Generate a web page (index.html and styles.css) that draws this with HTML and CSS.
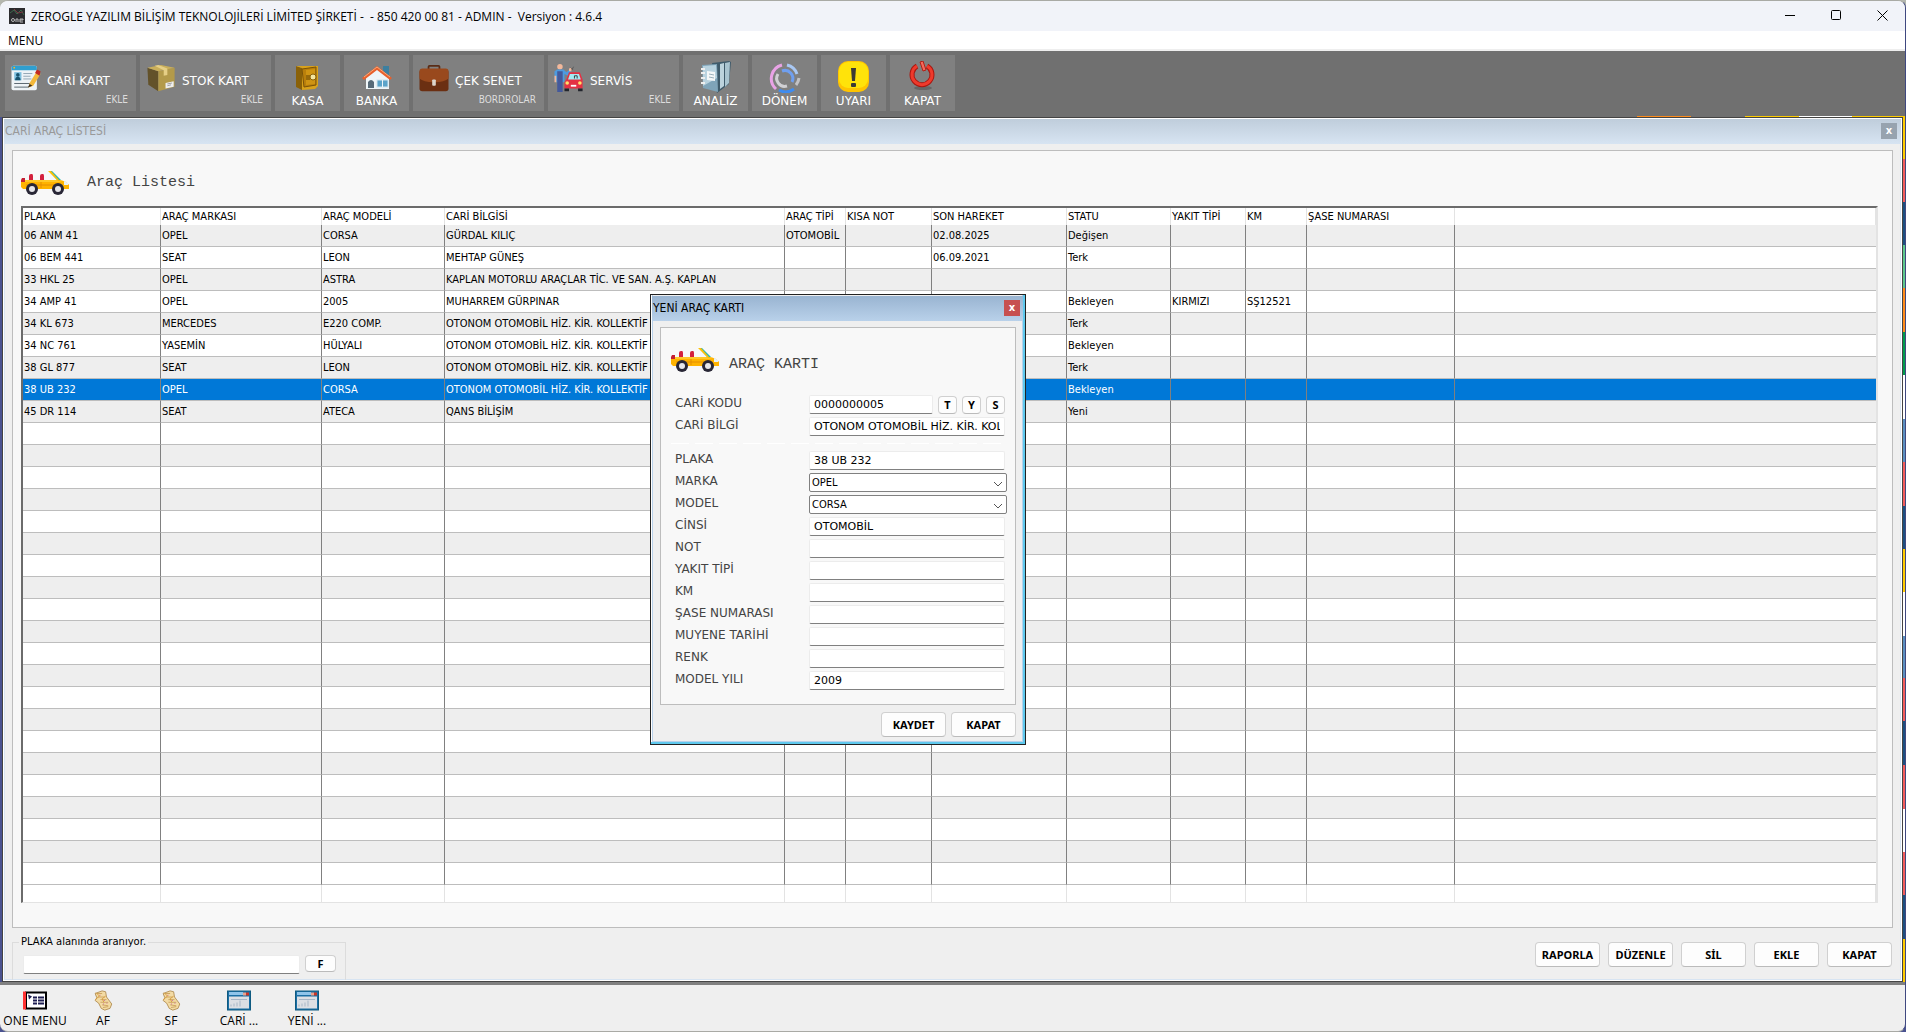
FILE: index.html
```html
<!DOCTYPE html>
<html lang="tr">

<head>
    <meta charset="UTF-8">
    <meta name="viewport" content="width=device-width, initial-scale=1.0">
    <title>Cari Araç Listesi</title>
    <link rel="stylesheet" href="styles.css">
</head>

<body>
    <svg class="defs" aria-hidden="true">
        <symbol id="car" viewBox="0 0 48 24">
            <path d="M28 0h3l9 9h-4z" fill="#2bb5b0" />
            <path d="M27 0h3l8 9h-2z" fill="#ffc107" />
            <path d="M8 9V5q0-2 2-2h1q1 0 1 2v4zM19 9V5q0-2 2-2h1q1 0 1 2v4z" fill="#d3203d" />
            <path d="M0 9h36c6 0 10 2 12 5v4H2L0 16z" fill="#ffb300" />
            <path d="M4 9h31l6 2H4z" fill="#ffc928" />
            <path d="M1 7h3v4H0V9z" fill="#c41f33" />
            <path d="M20 11v6M5 14h36" stroke="#e58e00" fill="none" />
            <path d="M43 10l4 2v2h-4z" fill="#e8f1f5" />
            <circle cx="11" cy="18" r="6" fill="#292736" />
            <circle cx="11" cy="18" r="3" fill="#e6e6ea" />
            <circle cx="37" cy="18" r="6" fill="#292736" />
            <circle cx="37" cy="18" r="3" fill="#e6e6ea" />
        </symbol>
        <symbol id="scroll" viewBox="0 0 24 24">
            <path d="M3 4l8-3 4 1 1 6 6 8-2 5-6 2-4-2-3-6-4-3 2-3z" fill="#f3dba4" stroke="#b08b50" />
            <path d="M5 4l6 0M6 8l8 0M9 11l7 0M9 14l9 0M11 17l7 1M12 20l6-1" stroke="#c9a05c" fill="none" />
            <path d="M4 3l4 4-5 4M15 7l-4 3 2 4" stroke="#d79a3c" fill="none" />
            <path d="M8 6h1M13 12h1M16 15h1M12 16h1" stroke="#c2559b" />
        </symbol>
        <symbol id="form" viewBox="0 0 24 20">
            <rect x=".5" y=".5" width="23" height="19" fill="#1b6fa5" stroke="#0f5a80" />
            <path d="M2 3h14" stroke="#8fc4ea" stroke-width="3" />
            <rect x="16" y="2" width="3" height="3" fill="#e8a08c" />
            <rect x="19" y="2" width="3" height="3" fill="#c93527" />
            <rect x="2" y="6" width="20" height="12" fill="#dcdfe4" />
            <path d="M4 16v-2M7 16v-3M10 16v-4M13 16v-6M4 9h16" stroke="#a7b6c6" />
        </symbol>
    </svg>

    <div class="app">
        <header class="titlebar">
            <svg class="app-icon" viewBox="0 0 16 16">
                <rect width="16" height="16" fill="#2b2b2e" />
                <path d="M1 5l4-3 3 4 4-4 3 5" stroke="#3d6a4c" fill="none" />
                <path d="M5 1l4 4 5-1" stroke="#7c3540" fill="none" />
                <circle cx="4" cy="12" r="1.500" stroke="#bbb" fill="none" />
                <path d="M7 14v-3h2v3M11 12h3v-1h-3v3h3" stroke="#bbb" fill="none" />
            </svg>
            <span class="app-title">ZEROGLE YAZILIM BİLİŞİM TEKNOLOJİLERİ LİMİTED ŞİRKETİ -&nbsp; - 850 420 00 81 - ADMIN -&nbsp; Versiyon : 4.6.4</span>
            <div class="window-buttons">
                <button type="button" aria-label="Simge durumuna küçült">
                    <svg viewBox="0 0 11 11"><path d="M0 5.500h10" /></svg>
                </button>
                <button type="button" aria-label="Ekranı kapla">
                    <svg viewBox="0 0 11 11"><rect x=".5" y=".5" width="9" height="9" rx="1" /></svg>
                </button>
                <button type="button" aria-label="Pencereyi kapat">
                    <svg viewBox="0 0 11 11"><path d="M.5 .5l10 10M10.500 .5l-10 10" /></svg>
                </button>
            </div>
        </header>

        <nav class="menubar"><a href="#">MENU</a></nav>

        <div class="toolbar">
            <button type="button" class="tool wide">
                <svg class="tool-icon" viewBox="0 0 32 32">
                    <rect x="0" y="2" width="28" height="27" rx="2" fill="#eef3f7" />
                    <path d="M0 7V4q0-2 2-2h24q2 0 2 2v3z" fill="#2f9fd0" />
                    <circle cx="3" cy="4" r="1" fill="#ffb020" />
                    <rect x="3" y="9" width="8" height="9" fill="#7fc0df" />
                    <circle cx="7" cy="12" r="2" fill="#17526e" />
                    <path d="M4 18q0-4 3-4t3 4z" fill="#17526e" />
                    <path d="M13 10.500h10M13 13.500h8M13 16.500h9" stroke="#8ba0b0" />
                    <path d="M3 21.500h18M3 25.500h16" stroke="#4d5a66" />
                    <path d="M20 21L28 8l4 3-8 13-5 2z" fill="#f4b83a" />
                    <path d="M26 10l2-4 4 2-1 5z" fill="#c22a22" />
                    <path d="M20 22l3 2-5 2z" fill="#3d2c18" />
                </svg>
                <span class="tool-label">CARİ KART</span>
                <span class="tool-sub">EKLE</span>
            </button>
            <button type="button" class="tool wide">
                <svg class="tool-icon" viewBox="0 0 32 32">
                    <path d="M1 4l12 4v22L2 23z" fill="#63522a" />
                    <path d="M13 8l18-4v21l-18 5z" fill="#b39a4a" />
                    <path d="M1 4l15-3 15 3-18 4z" fill="#c9ae5a" />
                    <path d="M9 2l4-1 10 4v7l-4 1V7z" fill="#e6cf86" />
                    <path d="M21 21l9-2v6l-9 2z" fill="#eee" />
                    <path d="M23 22l5-1M23 24l4-1" stroke="#999" />
                </svg>
                <span class="tool-label">STOK KART</span>
                <span class="tool-sub">EKLE</span>
            </button>
            <button type="button" class="tool small">
                <svg class="tool-icon" viewBox="0 0 32 32">
                    <path d="M4 5l6 2v22l-6-3z" fill="#8a6108" />
                    <path d="M4 5h22v20l-3 3-13 1V7z" fill="#d9a21a" />
                    <path d="M10 8l14-2v18l-12 2z" fill="#b97f0b" stroke="#7a5208" />
                    <path d="M14 9l9-1v15l-9 1z" fill="#cf9413" />
                    <path d="M15 14v5M17 14v5" stroke="#5f3f03" />
                    <circle cx="21" cy="16" r="3" fill="#f4e6a0" stroke="#8a6108" />
                </svg>
                <span class="tool-label">KASA</span>
            </button>
            <button type="button" class="tool small">
                <svg class="tool-icon" viewBox="0 0 32 32">
                    <rect x="22" y="5" width="6" height="10" fill="#3d7f9f" />
                    <path d="M5 16L16 7l12 9v12H5z" fill="#eef5f8" />
                    <path d="M1 17L16 5l15 12-2 2L16 9 3 19z" fill="#e8602c" />
                    <path d="M3 16L16 6l13 10" stroke="#f8a878" fill="none" />
                    <path d="M7 27v-6q3-4 6 0v6z" fill="#566a78" />
                    <rect x="16" y="19" width="11" height="7" fill="#5aa3c9" stroke="#cfe3ec" />
                    <path d="M21.500 19v7" stroke="#eef5f8" />
                </svg>
                <span class="tool-label">BANKA</span>
            </button>
            <button type="button" class="tool wide">
                <svg class="tool-icon" viewBox="0 0 32 32">
                    <path d="M10 6V3q0-1 1-1h10q1 0 1 1v3" stroke="#5a2c16" stroke-width="2" fill="none" />
                    <rect x="0" y="6" width="32" height="24" rx="3" fill="#6b2f12" />
                    <path d="M0 8q0-3 3-3h26q3 0 3 3v8q-4 4-16 4T0 16z" fill="#99491d" />
                    <rect x="14" y="17" width="4" height="7" rx="1" fill="#ddd5cc" />
                </svg>
                <span class="tool-label">ÇEK SENET</span>
                <span class="tool-sub">BORDROLAR</span>
            </button>
            <button type="button" class="tool wide">
                <svg class="tool-icon" viewBox="0 0 32 32">
                    <circle cx="6" cy="3" r="3" fill="#f2b89b" />
                    <path d="M0 8l3-2h7l3 3 4-3 2 1-4 6-4-2v9H2v-2H0z" fill="#4c9be0" />
                    <path d="M0 13h2v7H0zM16 5l3-1v4h-3z" fill="#f2b89b" />
                    <path d="M3 8h6v23H6V20v11H3z" fill="#44599b" />
                    <path d="M13 17l3-8h12l3 8v10H11v-7z" fill="#e43143" />
                    <path d="M17 11h10l2 6H15z" fill="#a4ecf5" />
                    <path d="M22 16v-3h3v3" stroke="#333" fill="none" />
                    <path d="M11 27h5v3h-5zM26 27h5v3h-5z" fill="#22252c" />
                    <circle cx="14" cy="21" r="2" fill="#ffe26b" />
                    <circle cx="28" cy="21" r="2" fill="#ffe26b" />
                    <rect x="18" y="23" width="6" height="2" fill="#fff" />
                    <path d="M18 4l2 2M21 3l-2 4" stroke="#555" />
                </svg>
                <span class="tool-label">SERVİS</span>
                <span class="tool-sub">EKLE</span>
            </button>
            <button type="button" class="tool small">
                <svg class="tool-icon" viewBox="0 0 32 32">
                    <path d="M12 2l17-2 2 1-2 22-12 9z" fill="#3f5b6b" />
                    <path d="M25 2l5-1-1 21-4 4z" fill="#a9c4d0" />
                    <path d="M20 3l4-1v23l-4 3z" fill="#bcd3dd" />
                    <path d="M2 4l15-1 1 28-15-4z" fill="#7fa4b9" />
                    <path d="M3 5l13-1 1 13L3 25z" fill="#b8d2df" />
                    <path d="M7 10l8 1v9l-8-1z" fill="#f4f7f8" />
                    <path d="M9 13l5 1M9 16l5 1" stroke="#9bb0bb" />
                    <path d="M1 8h4M1 12h4M1 17h4M1 22h4" stroke="#eee" stroke-width="2" />
                </svg>
                <span class="tool-label">ANALİZ</span>
            </button>
            <button type="button" class="tool small">
                <svg class="tool-icon" viewBox="0 0 32 32" fill="none" stroke-width="3">
                    <path d="M7 28A14 14 0 0 1 13 4" stroke="#e9a3e6" />
                    <path d="M18 4a14 14 0 0 1 10 9" stroke="#a9c8f4" />
                    <path d="M30 17a14 14 0 0 1-3 7" stroke="#c2c2c6" />
                    <path d="M10 29a14 14 0 0 0 15-1" stroke="#3e8cf0" />
                    <path d="M13 10a8 8 0 0 1 10 11" stroke="#6f9ff0" />
                    <path d="M9 13a8 8 0 0 0 9 12" stroke="#d0d0d4" />
                </svg>
                <span class="tool-label">DÖNEM</span>
            </button>
            <button type="button" class="tool small">
                <svg class="tool-icon" viewBox="0 0 32 32">
                    <rect x="0" y="0" width="31" height="31" rx="10" fill="#ffc400" />
                    <rect x="1" y="1" width="29" height="26" rx="9" fill="#ffe30a" />
                    <path d="M13 7h5l-1 13h-3z" fill="#3c3a35" />
                    <rect x="13" y="22" width="5" height="4" rx="1" fill="#3c3a35" />
                </svg>
                <span class="tool-label">UYARI</span>
            </button>
            <button type="button" class="tool small">
                <svg class="tool-icon" viewBox="0 0 32 32">
                    <ellipse cx="16" cy="27" rx="9" ry="2" fill="#666" />
                    <path d="M10 5A10 10 0 1 0 20 5" stroke="#a81710" stroke-width="5" fill="none" />
                    <path d="M10 5A10 10 0 1 0 20 5" stroke="#ee3a2c" stroke-width="3" fill="none" />
                    <path d="M13 1l3-1 3 9-3 1z" fill="#f4695c" stroke="#b31f16" />
                </svg>
                <span class="tool-label">KAPAT</span>
            </button>
        </div>

        <main class="desktop">
            <section class="window">
                <div class="window-title">
                    <h1>CARİ ARAÇ LİSTESİ</h1>
                    <button type="button" class="close" aria-label="Listeyi kapat">x</button>
                </div>
                <div class="panel">
                    <div class="panel-head">
                        <svg class="car"><use href="#car" /></svg>
                        <h2>Araç Listesi</h2>
                    </div>
                    <table class="grid">
                        <colgroup>
                            <col class="c-plaka">
                            <col class="c-marka">
                            <col class="c-model">
                            <col class="c-cari">
                            <col class="c-tip">
                            <col class="c-not">
                            <col class="c-hareket">
                            <col class="c-statu">
                            <col class="c-yakit">
                            <col class="c-km">
                            <col class="c-sase">
                            <col>
                        </colgroup>
                        <thead>
                            <tr><th>PLAKA</th><th>ARAÇ MARKASI</th><th>ARAÇ MODELİ</th><th>CARİ BİLGİSİ</th><th>ARAÇ TİPİ</th><th>KISA NOT</th><th>SON HAREKET</th><th>STATU</th><th>YAKIT TİPİ</th><th>KM</th><th>ŞASE NUMARASI</th><th></th></tr>
                        </thead>
                        <tbody id="rows">
                            <tr><td>06 ANM 41</td><td>OPEL</td><td>CORSA</td><td>GÜRDAL KILIÇ</td><td>OTOMOBİL</td><td></td><td>02.08.2025</td><td>Değişen</td><td></td><td></td><td></td><td></td></tr>
                            <tr><td>06 BEM 441</td><td>SEAT</td><td>LEON</td><td>MEHTAP GÜNEŞ</td><td></td><td></td><td>06.09.2021</td><td>Terk</td><td></td><td></td><td></td><td></td></tr>
                            <tr><td>33 HKL 25</td><td>OPEL</td><td>ASTRA</td><td>KAPLAN MOTORLU ARAÇLAR TİC. VE SAN. A.Ş. KAPLAN</td><td></td><td></td><td></td><td></td><td></td><td></td><td></td><td></td></tr>
                            <tr><td>34 AMP 41</td><td>OPEL</td><td>2005</td><td>MUHARREM GÜRPINAR</td><td></td><td></td><td></td><td>Bekleyen</td><td>KIRMIZI</td><td>SŞ12521</td><td></td><td></td></tr>
                            <tr><td>34 KL 673</td><td>MERCEDES</td><td>E220 COMP.</td><td>OTONOM OTOMOBİL HİZ. KİR. KOLLEKTİF</td><td></td><td></td><td></td><td>Terk</td><td></td><td></td><td></td><td></td></tr>
                            <tr><td>34 NC 761</td><td>YASEMİN</td><td>HÜLYALI</td><td>OTONOM OTOMOBİL HİZ. KİR. KOLLEKTİF</td><td></td><td></td><td></td><td>Bekleyen</td><td></td><td></td><td></td><td></td></tr>
                            <tr><td>38 GL 877</td><td>SEAT</td><td>LEON</td><td>OTONOM OTOMOBİL HİZ. KİR. KOLLEKTİF</td><td></td><td></td><td></td><td>Terk</td><td></td><td></td><td></td><td></td></tr>
                            <tr class="selected"><td>38 UB 232</td><td>OPEL</td><td>CORSA</td><td>OTONOM OTOMOBİL HİZ. KİR. KOLLEKTİF</td><td></td><td></td><td></td><td>Bekleyen</td><td></td><td></td><td></td><td></td></tr>
                            <tr><td>45 DR 114</td><td>SEAT</td><td>ATECA</td><td>QANS BİLİŞİM</td><td></td><td></td><td></td><td>Yeni</td><td></td><td></td><td></td><td></td></tr>
                        </tbody>
                        <tfoot>
                            <tr><td></td><td></td><td></td><td></td><td></td><td></td><td></td><td></td><td></td><td></td><td></td><td></td></tr>
                        </tfoot>
                    </table>
                </div>
                <div class="window-foot">
                    <fieldset class="search">
                        <legend>PLAKA alanında aranıyor.</legend>
                        <input type="text" class="field" aria-label="Plaka ara">
                        <button type="button" class="btn">F</button>
                    </fieldset>
                    <div class="actions">
                        <button type="button" class="btn">RAPORLA</button>
                        <button type="button" class="btn">DÜZENLE</button>
                        <button type="button" class="btn">SİL</button>
                        <button type="button" class="btn">EKLE</button>
                        <button type="button" class="btn">KAPAT</button>
                    </div>
                </div>
            </section>

            <form class="dialog">
                <div class="window-title">
                    <h2>YENİ ARAÇ KARTI</h2>
                    <button type="button" class="close" aria-label="Kartı kapat">x</button>
                </div>
                <div class="panel">
                    <div class="panel-head">
                        <svg class="car"><use href="#car" /></svg>
                        <h3>ARAÇ KARTI</h3>
                    </div>
                    <div class="form-row">
                        <label for="cariKodu">CARİ KODU</label>
                        <div class="code">
                            <input type="text" class="field" id="cariKodu" value="0000000005">
                            <button type="button" class="btn">T</button>
                            <button type="button" class="btn">Y</button>
                            <button type="button" class="btn">S</button>
                        </div>
                    </div>
                    <div class="form-row">
                        <label for="cariBilgi">CARİ BİLGİ</label>
                        <input type="text" class="field" id="cariBilgi" value="OTONOM OTOMOBİL HİZ. KİR. KOLLEKTİF">
                    </div>
                    <hr>
                    <div class="form-row">
                        <label for="plaka">PLAKA</label>
                        <input type="text" class="field" id="plaka" value="38 UB 232">
                    </div>
                    <div class="form-row">
                        <label for="marka">MARKA</label>
                        <div class="combo">
                            <select id="marka"><option>OPEL</option></select>
                            <svg viewBox="0 0 10 6"><path d="M1 1l4 4 4-4" /></svg>
                        </div>
                    </div>
                    <div class="form-row">
                        <label for="model">MODEL</label>
                        <div class="combo">
                            <select id="model"><option>CORSA</option></select>
                            <svg viewBox="0 0 10 6"><path d="M1 1l4 4 4-4" /></svg>
                        </div>
                    </div>
                    <div class="form-row">
                        <label for="cinsi">CİNSİ</label>
                        <input type="text" class="field" id="cinsi" value="OTOMOBİL">
                    </div>
                    <div class="form-row">
                        <label for="not">NOT</label>
                        <input type="text" class="field" id="not">
                    </div>
                    <div class="form-row">
                        <label for="yakit">YAKIT TİPİ</label>
                        <input type="text" class="field" id="yakit">
                    </div>
                    <div class="form-row">
                        <label for="km">KM</label>
                        <input type="text" class="field" id="km">
                    </div>
                    <div class="form-row">
                        <label for="sase">ŞASE NUMARASI</label>
                        <input type="text" class="field" id="sase">
                    </div>
                    <div class="form-row">
                        <label for="muayene">MUYENE TARİHİ</label>
                        <input type="text" class="field" id="muayene">
                    </div>
                    <div class="form-row">
                        <label for="renk">RENK</label>
                        <input type="text" class="field" id="renk">
                    </div>
                    <div class="form-row">
                        <label for="yil">MODEL YILI</label>
                        <input type="text" class="field" id="yil" value="2009">
                    </div>
                </div>
                <div class="actions">
                    <button type="button" class="btn">KAYDET</button>
                    <button type="button" class="btn">KAPAT</button>
                </div>
            </form>
        </main>

        <footer class="taskbar">
            <button type="button">
                <svg viewBox="0 0 24 20">
                    <rect x="3" y="2" width="20" height="16" fill="#fff" stroke="#000" stroke-width="2" />
                    <path d="M0 1h3v18H0z" fill="#f33" />
                    <path d="M5 4l4 2-3 3z" fill="#1c1c50" />
                    <path d="M10 7h4M15 7h6M10 10h4M15 10h6M10 13h4M15 13h6" stroke="#1c1c50" stroke-width="2" />
                </svg>
                ONE MENU
            </button>
            <button type="button"><svg><use href="#scroll" /></svg>AF</button>
            <button type="button"><svg><use href="#scroll" /></svg>SF</button>
            <button type="button"><svg><use href="#form" /></svg>CARİ ...</button>
            <button type="button"><svg><use href="#form" /></svg>YENİ ...</button>
        </footer>
    </div>

    <script>
        // Tabloyu boş satırlarla 30 satıra tamamla
        let rows = document.getElementById('rows');
        while (rows.rows.length < 30) {
            let tr = rows.insertRow();
            for (let i = 0; i < 12; i++) {
                tr.insertCell();
            }
        }
    </script>
</body>

</html>
```

FILE: styles.css
```css
* {
    box-sizing: border-box;
}

html {
    background: linear-gradient(#b4b7ae 70px, #4a5290 70px);
}

body {
    margin: 0;
    font-family: 'DejaVu Sans Condensed', 'DejaVu Sans', sans-serif;
    font-size: 11px;
    color: #000;
}

button,
input,
select {
    margin: 0;
    padding: 0;
    font: inherit;
    color: inherit;
}

button {
    border: none;
    background: none;
}

h1,
h2,
h3 {
    margin: 0;
    font-weight: normal;
}

.defs {
    display: none;
}

.app {
    display: flex;
    flex-direction: column;
    min-height: 100vh;
    border: 1px solid #a9aaa5;
    border-width: 1px 1px 1px 0;
    border-right-color: #3f4880;
    border-radius: 8px;
    overflow: hidden;
    background: #efefef;
}

/* Başlık çubuğu */
.titlebar {
    display: flex;
    align-items: center;
    height: 30px;
    padding-left: 9px;
    background: #f1f3f9;
    font-family: 'Open Sans', 'Noto Sans', sans-serif;
    font-size: 12px;
}

.app-icon {
    width: 16px;
    height: 16px;
    margin-right: 6px;
}

.app-title {
    flex: 1;
}

.window-buttons {
    display: flex;
}

.window-buttons button {
    width: 46px;
    height: 30px;
}

.window-buttons svg {
    width: 11px;
    height: 11px;
    fill: none;
    stroke: #000;
}

.menubar {
    height: 20px;
    padding-left: 8px;
    border-bottom: 2px solid #eee;
    background: #fff;
    font-family: 'Open Sans', 'Noto Sans', sans-serif;
    font-size: 12px;
    line-height: 20px;
}

.menubar a {
    color: #000;
    text-decoration: none;
}

/* Araç çubuğu */
.toolbar {
    display: flex;
    gap: 4px;
    height: 66px;
    padding: 4px 5px 6px;
    background: #707070;
    background-image: linear-gradient(#ff8c1a, #ff8c1a), linear-gradient(to right, #ffcc00 54px, #fff 54px, #fff 107px, #ffcc00 107px);
    background-size: 54px 1px, 160px 1px;
    background-position: right 214px bottom, right bottom;
    background-repeat: no-repeat;
}

.tool {
    height: 56px;
    background: #808080;
    color: #fff;
    font-family: 'DejaVu Sans', sans-serif;
    font-size: 12px;
    line-height: 14px;
}

.tool-icon {
    width: 32px;
    height: 32px;
}

.tool.wide {
    display: grid;
    grid-template-columns: 32px 1fr;
    grid-template-rows: 30px 14px;
    align-items: center;
    column-gap: 5px;
    width: 131px;
    padding: 8px 8px 4px 5px;
    text-align: left;
}

.tool.wide .tool-icon {
    height: 29px;
}

.tool.wide .tool-label {
    padding-top: 6px;
}

.tool-sub {
    grid-column: 1 / 3;
    text-align: right;
    color: #ddd;
    font-family: 'DejaVu Sans Condensed', 'DejaVu Sans', sans-serif;
    font-size: 10px;
}

.tool.small {
    display: flex;
    flex-direction: column;
    align-items: center;
    gap: 1px;
    width: 65px;
    padding-top: 6px;
}

/* Pencereler */
.desktop {
    position: relative;
    flex: 1;
    display: flex;
    padding: 0 2px 0 2px;
    border-bottom: 3px solid #808080;
    background: linear-gradient(#ffcc00 42px, #f25c5c 42px, #f25c5c 85px, #1b4f80 85px, #1b4f80 128px, #5cc78e 128px, #5cc78e 171px, #ff8c1a 171px, #ff8c1a 215px, #009a4e 215px, #009a4e 258px, #fff 258px, #fff 302px, #5a8fc0 302px, #5a8fc0 345px, #f25c5c 345px, #f25c5c 389px, #1b4f80 389px, #1b4f80 432px, #ffcc00 432px, #ffcc00 475px, #fff 475px, #fff 519px, #5a8fc0 519px, #5a8fc0 561px, #f25c5c 561px, #f25c5c 604px, #1b4f80 604px, #1b4f80 648px, #f25c5c 648px, #f25c5c 692px, #fff 692px, #fff 735px, #f25c5c 735px, #f25c5c 778px, #1b4f80 778px, #1b4f80 822px, #ffcc00 822px) right / 2px 100% no-repeat #4a5290;
}

.window {
    flex: 1;
    display: flex;
    flex-direction: column;
    border: 1px solid #444;
    background: #efefef;
    box-shadow: inset 0 0 0 1px #fff, inset 0 0 0 2px #d7e4f2;
}

.window-title {
    display: flex;
    align-items: center;
    justify-content: space-between;
    height: 25px;
    margin: 1px 1px 0;
    padding: 0 4px 1px 1px;
    background: linear-gradient(#bfcddb, #d7e4f2);
    color: #999;
}

.window-title h1,
.window-title h2 {
    font-size: 12px;
}

.close {
    width: 16px;
    height: 16px;
    background: #97a3af;
    color: #fff;
    font-family: 'DejaVu Sans', sans-serif;
    font-size: 10px;
    font-weight: bold;
    line-height: 14px;
}

.panel {
    border: 1px solid #bdbdbd;
    background: #f8f8f8;
}

.window .panel {
    flex: 1;
    margin: 6px 9px 0;
    padding: 20px 14px 24px 8px;
}

.panel-head {
    display: flex;
    align-items: center;
    height: 24px;
    color: #444;
    font-family: 'Liberation Mono', monospace;
}

.panel-head h2,
.panel-head h3 {
    font-size: 15px;
}

.window .panel-head {
    gap: 18px;
    margin-bottom: 11px;
}

.window .panel-head h2 {
    padding-bottom: 2px;
}

.car {
    width: 48px;
    height: 24px;
}

/* Araç tablosu */
.grid {
    width: 100%;
    table-layout: fixed;
    border: 2px solid #6b6b6b;
    border-right-color: #e3e3e3;
    border-bottom: 1px solid #e3e3e3;
    border-spacing: 0;
    background: #fff;
}

.c-plaka { width: 138px; }
.c-marka { width: 161px; }
.c-model { width: 123px; }
.c-cari { width: 340px; }
.c-tip { width: 61px; }
.c-not { width: 86px; }
.c-hareket { width: 135px; }
.c-statu { width: 104px; }
.c-yakit { width: 75px; }
.c-km { width: 61px; }
.c-sase { width: 148px; }

.grid th,
.grid td {
    padding: 0 0 0 1px;
    overflow: hidden;
    white-space: nowrap;
    text-align: left;
    font-weight: normal;
    line-height: 16px;
}

.grid th {
    height: 17px;
    border-right: 1px solid #e3e3e3;
}

.grid tbody td {
    height: 22px;
    border-right: 1px solid #808080;
    border-bottom: 1px solid #bdbdbd;
}

.grid tbody td:last-child {
    border-right: none;
}

.grid tbody tr:nth-child(odd) {
    background: #eee;
}

.grid tbody tr.selected {
    background: #0078d7;
    color: #fff;
}

.grid tfoot td {
    height: 17px;
    border-right: 1px solid #e3e3e3;
}

/* Alan ve düğmeler */
.field {
    width: 100%;
    height: 19px;
    padding: 0 4px;
    border: 1px solid #ececec;
    border-bottom-color: #808080;
    border-radius: 2px;
    background: #fff;
    font-family: 'DejaVu Sans', sans-serif;
    font-size: 11px;
}

.btn {
    width: 65px;
    height: 25px;
    border: 1px solid #d0d0d0;
    border-bottom-color: #bbb;
    border-radius: 4px;
    background: #fdfdfd;
    font-family: 'Noto Sans', sans-serif;
    font-size: 11px;
    font-weight: bold;
    line-height: 14px;
}

.window-foot {
    display: flex;
    justify-content: space-between;
    height: 53px;
    padding: 7px 10px 0 9px;
}

.actions {
    display: flex;
    gap: 8px;
    padding-top: 7px;
}

.search {
    display: flex;
    gap: 5px;
    width: 334px;
    height: 45px;
    margin: 0;
    padding: 6px 9px 0 10px;
    border: 1px solid #dcdcdc;
    border-bottom: none;
}

.search legend {
    margin-left: -4px;
    padding: 0 2px;
    font-family: 'DejaVu Sans', sans-serif;
    font-size: 10px;
    line-height: 14px;
}

.search .btn {
    flex: none;
    width: 31px;
    height: 17px;
    line-height: 12px;
}

/* Yeni araç kartı */
.dialog {
    position: absolute;
    top: 177px;
    left: 650px;
    width: 376px;
    padding-bottom: 7px;
    border: 1px solid #222;
    background: #efefef;
    box-shadow: inset -2px -2px 0 #5fc9ee, inset 1px 0 0 #fff, inset 2px 0 0 #b9d1ea, inset -3px -3px 0 #b9d1ea;
}

.dialog .window-title {
    margin-right: 2px;
    padding-right: 3px;
    background: linear-gradient(#99b4d1, #b9d1ea);
    color: #000;
}

.dialog .close {
    background: #c75050;
}

.dialog .panel {
    margin: 6px 9px 0;
    padding: 20px 6px 14px 10px;
}

.dialog .panel-head {
    gap: 10px;
    margin-bottom: 23px;
}

.dialog .panel-head h3 {
    padding-top: 8px;
}

.form-row {
    display: grid;
    grid-template-columns: 134px 196px;
    height: 19px;
    margin-bottom: 3px;
    padding-left: 4px;
}

.form-row:last-child {
    margin-bottom: 0;
}

.form-row label {
    color: #444;
    font-family: 'DejaVu Sans', sans-serif;
    font-size: 12px;
    line-height: 16px;
}

.code {
    display: flex;
    align-items: center;
    gap: 5px;
}

.code .btn {
    flex: none;
    width: 19px;
    height: 18px;
    line-height: 12px;
}

.dialog hr {
    height: 1px;
    margin: 7px 8px 7px 0;
    border: none;
    background: repeating-linear-gradient(to right, #fff 0, #fff 18px, #f8f8f8 18px, #f8f8f8 24px);
}

.combo {
    position: relative;
    width: 198px;
}

.combo select {
    width: 100%;
    height: 19px;
    padding: 0 0 1px 2px;
    appearance: none;
    border: 1px solid #808080;
    border-radius: 2px;
    background: #fff;
}

.combo svg {
    position: absolute;
    top: 8px;
    right: 4px;
    width: 10px;
    height: 6px;
    fill: none;
    stroke: #555;
    pointer-events: none;
}

.dialog .actions {
    justify-content: flex-end;
    gap: 5px;
    padding-right: 9px;
}

/* Görev çubuğu */
.taskbar {
    display: flex;
    height: 46px;
    padding-left: 1px;
    font-family: 'Open Sans', 'Noto Sans', sans-serif;
    font-size: 12px;
}

.taskbar button {
    display: flex;
    flex-direction: column;
    align-items: center;
    gap: 2px;
    width: 68px;
    padding-top: 5px;
    line-height: 16px;
    white-space: nowrap;
}

.taskbar svg {
    width: 24px;
    height: 21px;
}
```
